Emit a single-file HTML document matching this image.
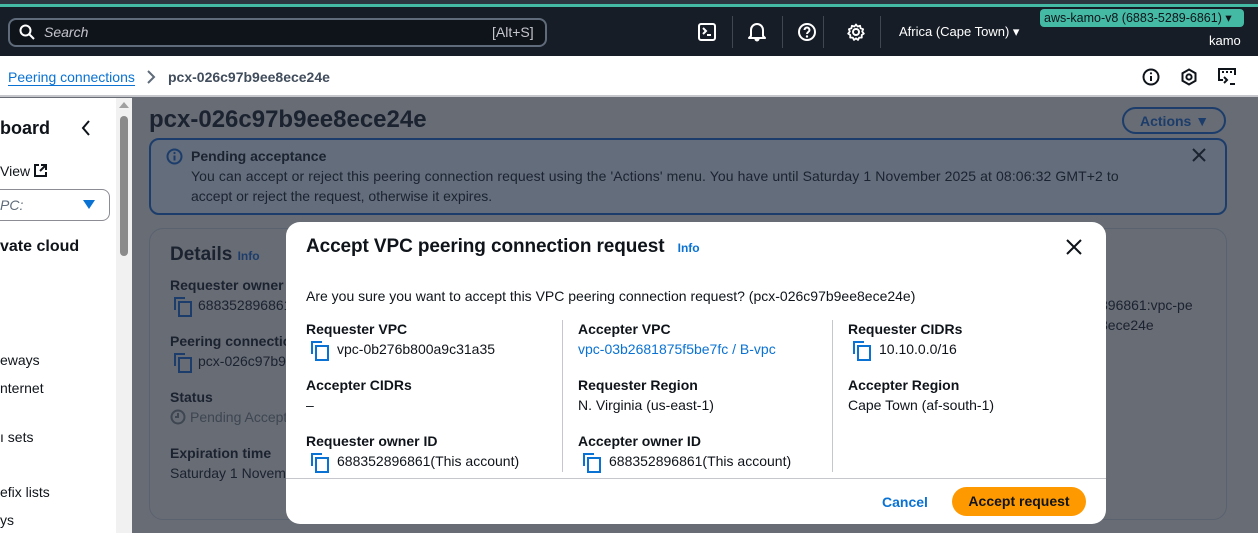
<!DOCTYPE html>
<html><head><meta charset="utf-8"><style>
*{box-sizing:border-box;margin:0;padding:0}
body{width:1258px;height:533px;overflow:hidden;position:relative;font-family:"Liberation Sans",sans-serif;background:#686c74;color:#1b2230}
.a{position:absolute;white-space:nowrap}
.top{left:0;top:0;width:1258px;height:56px;background:#161d26}
.teal{left:0;top:0;width:1258px;height:5px;background:#2b3640}
.teal2{left:0;top:4px;width:1258px;height:3px;background:#44b9a4}
.sep{width:1px;height:32px;background:#414750;top:16px}
.bc{left:0;top:56px;width:1258px;height:41px;background:#fff;border-bottom:2px solid #c6c6cd}
.side{left:0;top:98px;width:116px;height:435px;background:#fff}
.track{left:116px;top:98px;width:16px;height:435px;background:#f1f1f1}
.thumb{left:120px;top:116px;width:8px;height:140px;background:#8b8b8b;border-radius:4px}
.modal{left:286px;top:222px;width:820px;height:302px;background:#fff;border-radius:14px;overflow:hidden}
.lbl{font-weight:bold;font-size:14px;color:#0f141a}
.val{font-size:14px;color:#0f141a}
.cp{display:inline-block;width:16px;height:16px;position:relative;vertical-align:-3px;margin:0 10px 0 5px}
.cp:before{content:"";position:absolute;left:0;top:0;width:9px;height:11px;border-left:2px solid #0972d3;border-top:2px solid #0972d3}
.cp:after{content:"";position:absolute;left:4px;top:4px;width:10px;height:12px;border:2px solid #0972d3}
.dcp{display:inline-block;width:16px;height:16px;position:relative;vertical-align:-3px;margin-right:8px}
.dcp:before{content:"";position:absolute;left:0;top:0;width:9px;height:11px;border-left:2px solid #1c3d6b;border-top:2px solid #1c3d6b}
.dcp:after{content:"";position:absolute;left:4px;top:4px;width:10px;height:12px;border:2px solid #1c3d6b}
.vl{width:1px;background:#c6c6cd}
.bg{font-size:14px;color:#1b2230}
</style></head><body>
<div class="a top"></div>
<div class="a teal"></div><div class="a teal2"></div>
<div class="a" style="left:8px;top:18px;width:539px;height:29px;border:2px solid #5f6b7a;border-radius:8px;background:#0f141a"></div>
<svg class="a" style="left:19px;top:24px" width="16" height="16" viewBox="0 0 16 16"><circle cx="6.5" cy="6.5" r="5" fill="none" stroke="#fff" stroke-width="2"/><path d="M10.5 10.5L15 15" stroke="#fff" stroke-width="2"/></svg>
<div class="a" style="left:44px;top:24px;font-size:14px;font-style:italic;color:#c6c6cd">Search</div>
<div class="a" style="left:492px;top:24px;font-size:14px;color:#c6c6cd">[Alt+S]</div>
<svg class="a" style="left:698px;top:23px" width="18" height="18" viewBox="0 0 18 18"><rect x="1" y="1" width="16" height="16" rx="2" fill="none" stroke="#fff" stroke-width="2"/><path d="M5 5l3 3-3 3M9 12h4" stroke="#fff" stroke-width="2" fill="none"/></svg>
<div class="a sep" style="left:732px"></div>
<svg class="a" style="left:748px;top:22px" width="18" height="20" viewBox="0 0 18 20"><path d="M3 14V8a6 6 0 0112 0v6l2 2H1z" fill="none" stroke="#fff" stroke-width="2" stroke-linejoin="round"/><path d="M7 17a2 2 0 004 0" fill="#fff" stroke="#fff"/></svg>
<div class="a sep" style="left:782px"></div>
<svg class="a" style="left:798px;top:23px" width="18" height="18" viewBox="0 0 18 18"><circle cx="9" cy="9" r="8" fill="none" stroke="#fff" stroke-width="2"/><path d="M6.5 7a2.5 2.5 0 115 0c0 2-2.5 2-2.5 4" fill="none" stroke="#fff" stroke-width="2"/><circle cx="9" cy="13.5" r="1.2" fill="#fff"/></svg>
<div class="a sep" style="left:823px"></div>
<svg class="a" style="left:847px;top:23px" width="18" height="18" viewBox="0 0 18 18"><circle cx="9" cy="9" r="3" fill="none" stroke="#fff" stroke-width="2"/><path d="M9 1.5l1.6 2 2.5-.7.5 2.5 2.5.9-.9 2.4 1.6 2-2.1 1.4.1 2.6-2.6 0-1.2 2.3-2-1.5-2 1.5-1.2-2.3-2.6 0 .1-2.6-2.1-1.4 1.6-2-.9-2.4 2.5-.9.5-2.5 2.5.7z" fill="none" stroke="#fff" stroke-width="1.8" stroke-linejoin="round"/></svg>
<div class="a sep" style="left:880px"></div>
<div class="a" style="left:899px;top:24px;font-size:13px;color:#fff">Africa (Cape Town) ▾</div>
<div class="a" style="left:1040px;top:9px;width:204px;height:18px;background:#44b9a4;border-radius:4px;font-size:12.5px;color:#0f141a;padding:1px 0 0 4px">aws-kamo-v8 (6883-5289-6861) ▾</div>
<div class="a" style="left:1209px;top:33px;font-size:13px;color:#fff">kamo</div>

<div class="a bc"></div>
<div class="a" style="left:8px;top:69px;font-size:14px;color:#0972d3;border-bottom:1px solid #0972d3;line-height:16px">Peering connections</div>
<svg class="a" style="left:146px;top:70px" width="10" height="14" viewBox="0 0 10 14"><path d="M2 1l6 6-6 6" fill="none" stroke="#5f6b7a" stroke-width="2"/></svg>
<div class="a" style="left:168px;top:69px;font-size:14px;color:#414d5c;font-weight:bold">pcx-026c97b9ee8ece24e</div>
<svg class="a" style="left:1142px;top:68px" width="18" height="18" viewBox="0 0 18 18"><circle cx="9" cy="9" r="7.5" fill="none" stroke="#0f141a" stroke-width="2"/><path d="M9 8v5" stroke="#0f141a" stroke-width="2"/><circle cx="9" cy="5.3" r="1.1" fill="#0f141a"/></svg>
<svg class="a" style="left:1180px;top:68px" width="18" height="18" viewBox="0 0 18 18"><path d="M9 1.5l6.5 3.7v7.6L9 16.5l-6.5-3.7V5.2z" fill="none" stroke="#0f141a" stroke-width="2"/><circle cx="9" cy="9" r="2.6" fill="none" stroke="#0f141a" stroke-width="2"/></svg>
<svg class="a" style="left:1218px;top:68px" width="20" height="18" viewBox="0 0 20 18"><path d="M5 12H1V1h16v6" fill="none" stroke="#0f141a" stroke-width="2"/><path d="M4 4h2M8 4h2M12 4h2M6 9l3 3-3 3M12 16h5" stroke="#0f141a" stroke-width="2" fill="none"/></svg>

<div class="a side"></div>
<div class="a track"></div><div class="a thumb"></div>
<div class="a" style="left:119px;top:102px;width:0;height:0;border:5px solid transparent;border-bottom:6px solid #a0a0a0;border-top:0"></div>
<div class="a" style="left:0;top:118px;font-size:18px;font-weight:bold;color:#0f141a">board</div>
<svg class="a" style="left:81px;top:120px" width="10" height="16" viewBox="0 0 10 16"><path d="M8 1L2 8l6 7" fill="none" stroke="#0f141a" stroke-width="2"/></svg>
<div class="a" style="left:0;top:163px;font-size:14px;color:#0f141a">View</div>
<svg class="a" style="left:34px;top:164px" width="13" height="13" viewBox="0 0 13 13"><path d="M5 1H1v11h11V8M7 1h5v5M12 1L6 7" fill="none" stroke="#0f141a" stroke-width="2"/></svg>
<div class="a" style="left:-10px;top:189px;width:120px;height:32px;border:1px solid #8c8c94;border-radius:8px"></div>
<div class="a" style="left:0;top:197px;font-size:14px;font-style:italic;color:#5f6b7a">PC:</div>
<div class="a" style="left:83px;top:200px;width:0;height:0;border-left:6px solid transparent;border-right:6px solid transparent;border-top:9px solid #0972d3"></div>
<div class="a" style="left:0;top:238px;font-size:16px;font-weight:bold;color:#0f141a">vate cloud</div>
<div class="a" style="left:0;top:352px;font-size:14px;color:#0f141a">eways</div>
<div class="a" style="left:0;top:380px;font-size:14px;color:#0f141a">nternet</div>
<div class="a" style="left:0;top:429px;font-size:14px;color:#0f141a">ı sets</div>
<div class="a" style="left:0;top:484px;font-size:14px;color:#0f141a">efix lists</div>
<div class="a" style="left:0;top:512px;font-size:14px;color:#0f141a">ys</div>

<div class="a" style="left:149px;top:106px;font-size:24px;font-weight:bold;color:#1b2230">pcx-026c97b9ee8ece24e</div>
<div class="a" style="left:1122px;top:107px;width:104px;height:27px;border:2px solid #1c3d6b;border-radius:14px;font-size:14px;font-weight:bold;color:#1c3d6b;padding:4px 0 0 16px">Actions ▼</div>
<div class="a" style="left:149px;top:138px;width:1078px;height:77px;border:2px solid #1c3d6b;border-radius:10px;background:#636d7b"></div>
<svg class="a" style="left:166px;top:148px" width="17" height="17" viewBox="0 0 17 17"><circle cx="8.5" cy="8.5" r="7" fill="none" stroke="#1c3d6b" stroke-width="2"/><path d="M8.5 7.5v5" stroke="#1c3d6b" stroke-width="2"/><circle cx="8.5" cy="5" r="1.1" fill="#1c3d6b"/></svg>
<div class="a bg" style="left:191px;top:148px;font-weight:bold">Pending acceptance</div>
<div class="a bg" style="left:191px;top:168px;letter-spacing:0.1px">You can accept or reject this peering connection request using the 'Actions' menu. You have until Saturday 1 November 2025 at 08:06:32 GMT+2 to</div>
<div class="a bg" style="left:191px;top:188px">accept or reject the request, otherwise it expires.</div>
<svg class="a" style="left:1192px;top:148px" width="14" height="14" viewBox="0 0 14 14"><path d="M1 1l12 12M13 1L1 13" stroke="#1b2230" stroke-width="2"/></svg>

<div class="a" style="left:149px;top:228px;width:1078px;height:292px;border:1px solid #5a6270;border-radius:14px"></div>
<div class="a" style="left:170px;top:244px;font-size:19px;font-weight:bold;color:#1b2230">Details <span style="font-size:12px;color:#1c3d6b">Info</span></div>
<div class="a bg" style="left:170px;top:277px;font-weight:bold">Requester owner ID</div>
<div class="a bg" style="left:174px;top:297px"><span class="dcp"></span>688352896861</div>
<div class="a bg" style="left:170px;top:333px;font-weight:bold">Peering connection</div>
<div class="a bg" style="left:174px;top:353px"><span class="dcp"></span>pcx-026c97b9</div>
<div class="a bg" style="left:170px;top:389px;font-weight:bold">Status</div>
<svg class="a" style="left:170px;top:409px" width="16" height="16" viewBox="0 0 16 16"><circle cx="8" cy="8" r="6.5" fill="none" stroke="#3e4652" stroke-width="2"/><path d="M8 4v4H5" fill="none" stroke="#3e4652" stroke-width="2"/></svg>
<div class="a bg" style="left:190px;top:409px;color:#3e4652">Pending Accept</div>
<div class="a bg" style="left:170px;top:445px;font-weight:bold">Expiration time</div>
<div class="a bg" style="left:170px;top:465px">Saturday 1 Novem</div>
<div class="a bg" style="left:1100px;top:297px">896861:vpc-pe</div>
<div class="a bg" style="left:1100px;top:317px">8ece24e</div>

<div class="a modal">
  <div class="a" style="left:20px;top:14px;font-size:19px;font-weight:bold;color:#0f141a;letter-spacing:-0.1px">Accept VPC peering connection request <span style="font-size:12px;color:#0972d3;margin-left:8px;letter-spacing:0">Info</span></div>
  <svg class="a" style="left:779px;top:16px" width="18" height="18" viewBox="0 0 18 18"><path d="M2 2l14 14M16 2L2 16" stroke="#0f141a" stroke-width="2"/></svg>
  <div class="a val" style="left:20px;top:66px">Are you sure you want to accept this VPC peering connection request? (pcx-026c97b9ee8ece24e)</div>
  <div class="a vl" style="left:276px;top:98px;height:152px"></div>
  <div class="a vl" style="left:546px;top:98px;height:152px"></div>
  <div class="a lbl" style="left:20px;top:99px">Requester VPC</div>
  <div class="a val" style="left:20px;top:119px"><span class="cp"></span>vpc-0b276b800a9c31a35</div>
  <div class="a lbl" style="left:20px;top:155px">Accepter CIDRs</div>
  <div class="a val" style="left:20px;top:175px">–</div>
  <div class="a lbl" style="left:20px;top:211px">Requester owner ID</div>
  <div class="a val" style="left:20px;top:231px"><span class="cp"></span>688352896861(This account)</div>
  <div class="a lbl" style="left:292px;top:99px">Accepter VPC</div>
  <div class="a val" style="left:292px;top:119px;color:#0972d3">vpc-03b2681875f5be7fc / B-vpc</div>
  <div class="a lbl" style="left:292px;top:155px">Requester Region</div>
  <div class="a val" style="left:292px;top:175px">N. Virginia (us-east-1)</div>
  <div class="a lbl" style="left:292px;top:211px">Accepter owner ID</div>
  <div class="a val" style="left:292px;top:231px"><span class="cp"></span>688352896861(This account)</div>
  <div class="a lbl" style="left:562px;top:99px">Requester CIDRs</div>
  <div class="a val" style="left:562px;top:119px"><span class="cp"></span>10.10.0.0/16</div>
  <div class="a lbl" style="left:562px;top:155px">Accepter Region</div>
  <div class="a val" style="left:562px;top:175px">Cape Town (af-south-1)</div>
  <div class="a" style="left:0;top:256px;width:820px;height:1px;background:#c6c6cd"></div>
  <div class="a" style="left:596px;top:272px;font-size:14px;font-weight:bold;color:#0972d3">Cancel</div>
  <div class="a" style="left:666px;top:265px;width:134px;height:29px;background:#ff9900;border-radius:15px;font-size:14px;font-weight:bold;color:#0f141a;text-align:center;padding-top:6px">Accept request</div>
</div>
</body></html>
